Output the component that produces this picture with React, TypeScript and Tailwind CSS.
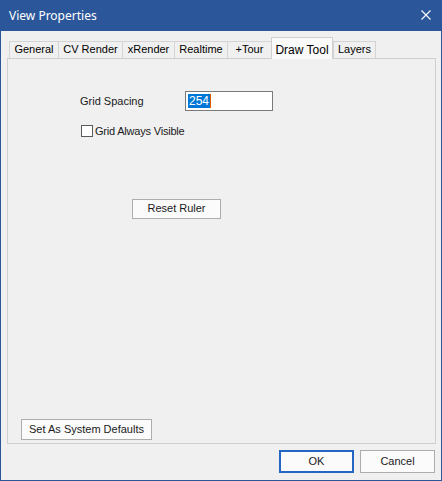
import React from "react";

// Tab labels with their measured widths (px)
const TABS = [
    { label: "General", w: 49 },
    { label: "CV Render", w: 64 },
    { label: "xRender", w: 52 },
    { label: "Realtime", w: 53 },
    { label: "+Tour", w: 44 },
    { label: "Draw Tool", w: 62, active: true },
    { label: "Layers", w: 43 },
];

const ui = { fontFamily: '"Liberation Sans", Arial, sans-serif' };

function WinButton({ children, className = "" }: { children: React.ReactNode; className?: string }) {
    return (
        <div className={`flex items-center justify-center bg-[#fbfbfb] text-[11px] text-[#1a1a1a] ${className}`}>
            {children}
        </div>
    );
}

export default function App() {
    return (
        <div className="w-[442px] h-[481px] bg-[#2b579a] flex flex-col select-none" style={ui}>
            {/* Title bar */}
            <div className="h-[31px] flex items-center justify-between pl-[9px] pr-[11px] shrink-0">
                <span className="text-white text-[12px]" style={{ fontFamily: '"Noto Sans", "Open Sans", sans-serif' }}>
                    View Properties
                </span>
                <svg width="10" height="10" viewBox="0 0 10 10" className="mt-[-1px]">
                    <path d="M0.5 0.5 L9.5 9.5 M9.5 0.5 L0.5 9.5" stroke="#fff" strokeWidth="1.1" />
                </svg>
            </div>

            {/* Client area */}
            <div className="flex-1 mx-[1px] mb-[1px] bg-[#f0f0f0] flex flex-col">
                {/* Tab strip */}
                <div className="flex items-end h-[27px] pl-[8px] shrink-0">
                    {TABS.map((t) =>
                        t.active ? (
                            <div
                                key={t.label}
                                style={{ width: t.w }}
                                className="h-[22px] mb-[-1px] relative z-10 bg-[#fafafa] border border-b-0 border-[#cfcfcf] flex items-center justify-center text-[12px] text-black pt-[2px]"
                            >
                                {t.label}
                            </div>
                        ) : (
                            <div
                                key={t.label}
                                style={{ width: t.w }}
                                className={`h-[17px] bg-[#f0f0f0] border-t border-l border-[#d4d4d4] flex items-center justify-center text-[11px] text-black pb-[1px] ${t.label === "Layers" ? "border-r" : ""}`}
                            >
                                {t.label}
                            </div>
                        )
                    )}
                </div>

                {/* Tab page */}
                <div className="ml-[6px] w-[429px] h-[386px] border border-[#cfcfcf] bg-[#f0f0f0] flex flex-col shrink-0">
                    <div className="flex items-center mt-[32px] ml-[72px]">
                        <span className="text-[11px] text-[#1a1a1a] w-[105px]">Grid Spacing</span>
                        <div className="w-[88px] h-[20px] bg-white border border-[#7a7a7a] flex items-center pl-[2px]">
                            <span className="bg-[#0078d7] text-white text-[12px] leading-[14px] px-[1px]">254</span>
                            <span className="w-[1px] h-[14px] bg-[#e35b00]" />
                        </div>
                    </div>
                    <div className="flex items-center mt-[12px] ml-[73px] gap-[2px]">
                        <div className="w-[12px] h-[12px] bg-white border border-[#5a5a5a]" />
                        <span className="text-[11px] tracking-[-0.2px] text-[#1a1a1a]">Grid Always Visible</span>
                    </div>

                    <WinButton className="ml-[124px] mt-[59px] w-[89px] h-[20px] border border-[#adadad]">Reset Ruler</WinButton>

                    <WinButton className="ml-[13px] mt-auto mb-[3px] w-[131px] h-[21px] border border-[#adadad]">
                        Set As System Defaults
                    </WinButton>
                </div>

                {/* Footer */}
                <div className="flex justify-end gap-[6px] pr-[6px] pt-[6px]">
                    <WinButton className="w-[75px] h-[23px] border-2 border-[#2566c2]">OK</WinButton>
                    <WinButton className="w-[75px] h-[23px] border border-[#adadad]">Cancel</WinButton>
                </div>
            </div>
        </div>
    );
}
